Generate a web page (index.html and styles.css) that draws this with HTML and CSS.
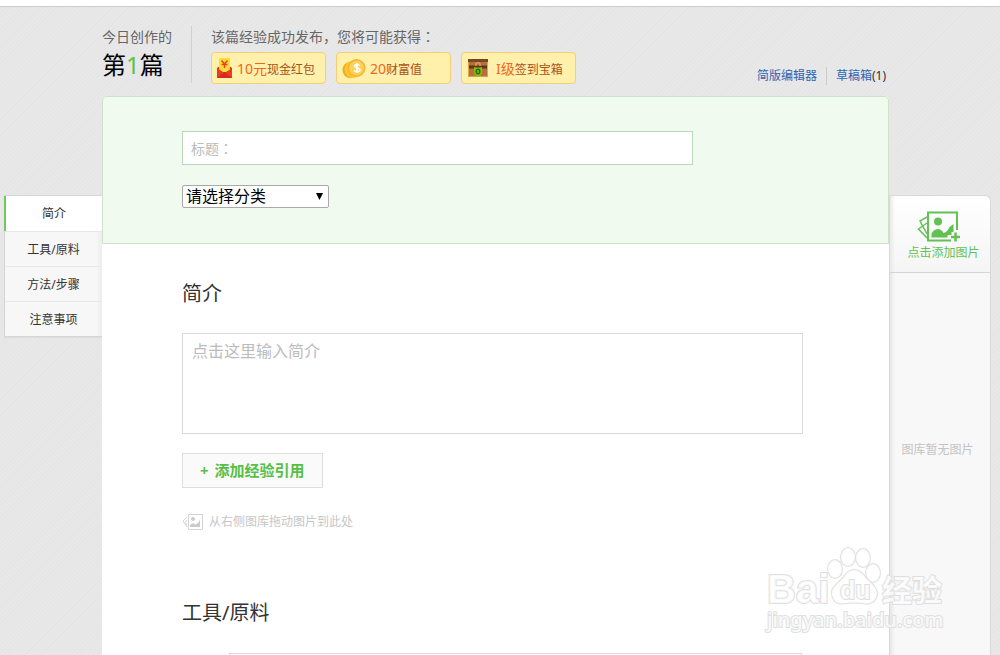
FILE: index.html
```html
<!DOCTYPE html>
<html lang="zh-CN">
<head>
<meta charset="utf-8">
<meta name="viewport" content="width=device-width, initial-scale=1">
<title>百度经验 - 写经验</title>
<link rel="stylesheet" href="styles.css">
</head>
<body>
<div class="page">
  <header class="top">
    <div class="count">
      <span class="count-label">今日创作的</span>
      <strong class="count-value">第<em>1</em>篇</strong>
    </div>
    <div class="rewards">
      <p class="rewards-title">该篇经验成功发布，您将可能获得<span class="centered-mark" lang="zh-Hant">：</span></p>
      <ul class="reward-list">
        <li class="reward">
          <svg class="reward-icon" width="24" height="24" viewBox="0 0 24 24" aria-hidden="true">
            <path d="M5 12l7.500-5 7.500 5v10H5z" fill="#c9281c"/>
            <path d="M7 2h11v14H7z" fill="#fddb3a"/>
            <path d="M9.500 4.500l3 3.500 3-3.500M9.500 8.500h6M12.500 8v4" stroke="#e5421f" stroke-width="1.400" fill="none"/>
            <path d="M5 12l7.500 5 7.500-5v10H5z" fill="#ea3d25"/>
            <path d="M5 22l7.500-6 7.500 6z" fill="#d42c1c"/>
          </svg>
          <span class="reward-text"><b>10元</b>现金红包</span>
        </li>
        <li class="reward">
          <svg class="reward-icon" width="26" height="24" viewBox="0 0 26 24" aria-hidden="true">
            <circle cx="9.500" cy="14" r="8" fill="#f0a91c"/>
            <circle cx="12" cy="13.500" r="8.500" fill="#fbc92e"/>
            <circle cx="15.500" cy="12" r="9" fill="#f7b32b"/>
            <circle cx="15.500" cy="12" r="7.500" fill="#fdd05a"/>
            <path d="M18.500 9.500c-1-1.500-5-1.500-5 .500 0 2.500 5.500 1.500 5.500 4 0 2-4.500 2-6 .500M16 7v10" fill="none" stroke="#fff" stroke-width="1.600"/>
          </svg>
          <span class="reward-text"><b>20</b>财富值</span>
        </li>
        <li class="reward">
          <svg class="reward-icon" width="22" height="22" viewBox="0 0 22 22" aria-hidden="true">
            <path d="M1 2h20v18H1z" fill="#b8703a"/>
            <path d="M1 2h20v3H1z" fill="#7a4520"/>
            <path d="M1 8.500h20v3H1z" fill="#5f3418"/>
            <path d="M1.500 5v15M20.500 5v15" stroke="#e0a840"/>
            <path d="M1 19.500h20" stroke="#dba044"/>
            <path d="M9 9V7q2-3 4 0v2" fill="none" stroke="#d9a05a" stroke-width="1.500"/>
            <path d="M7 10q4 1 8 0v6q-1 3-4 4-3-1-4-4z" fill="#7fc200"/>
            <ellipse cx="11" cy="14.500" rx="2.500" ry="3" fill="#2f6410"/>
            <path d="M11 13v3" stroke="#b3e43a"/>
          </svg>
          <span class="reward-text"><b>I级</b>签到宝箱</span>
        </li>
      </ul>
    </div>
    <nav class="top-links" aria-label="编辑器">
      <a href="#simple">简版编辑器</a>
      <span class="drafts"><a href="#drafts">草稿箱</a>(1)</span>
    </nav>
  </header>

  <nav class="steps" aria-label="章节">
    <a class="step step-current" href="#intro" aria-current="true">简介</a>
    <a class="step" href="#tools">工具/原料</a>
    <a class="step" href="#method">方法/步骤</a>
    <a class="step" href="#notes">注意事项</a>
  </nav>

  <main class="editor">
    <div class="basics">
      <input class="title-input centered-mark" lang="zh-Hant" type="text" placeholder="标题：" aria-label="标题">
      <select class="category" aria-label="分类">
        <option>请选择分类</option>
      </select>
    </div>
    <section class="section" id="intro">
      <h2 class="section-title">简介</h2>
      <textarea class="intro-input" placeholder="点击这里输入简介" aria-label="简介"></textarea>
      <button class="cite" type="button"><span class="cite-plus">+</span>添加经验引用</button>
      <p class="drop-hint">
        <svg width="22" height="16" viewBox="0 0 22 16" aria-hidden="true">
          <path d="M6.500.500h14v15h-14z" fill="#fff" stroke="#d4d4d4"/>
          <path d="M5 3L1 7l4 6M5 6L3 8.500 5 11" fill="none" stroke="#d4d4d4"/>
          <circle cx="11" cy="5" r="2" fill="#ccc"/>
          <path d="M8 13v-2q3-3 5-.500 3-.500 5-5V13z" fill="#ccc"/>
        </svg>
        从右侧图库拖动图片到此处
      </p>
    </section>
    <section class="section section-tools" id="tools">
      <h2 class="section-title">工具/原料</h2>
      <input class="tool-input" type="text" aria-label="工具/原料">
    </section>
  </main>

  <aside class="gallery" aria-label="图库">
    <button class="add-image" type="button">
      <svg class="add-icon" width="44" height="32" viewBox="0 0 44 32" aria-hidden="true">
        <path d="M10 6L3 10l7 13M10 12L1.500 18 10 27" fill="none" stroke="#63c153" stroke-width="1.500"/>
        <path d="M34 29.500H11V1.500h29V19" fill="none" stroke="#63c153" stroke-width="2"/>
        <circle cx="21" cy="10.500" r="4" fill="#63c153"/>
        <path d="M14.500 26.500V23q1-4 6-5 4 0 6 4 4-1 6-6l4-3v8h-2v3h-4v2.500z" fill="#63c153"/>
        <path d="M38.500 21.500v9M34 26h9" stroke="#63c153" stroke-width="2.500"/>
      </svg>
      点击添加图片
    </button>
    <p class="gallery-empty">图库暂无图片</p>
  </aside>
</div>

<svg class="watermark" width="190" height="96" viewBox="0 0 190 96" role="img" aria-label="百度经验">
  <g class="mark">
    <text class="mark-latin" x="4" y="58">Bai</text>
    <ellipse cx="72" cy="24" rx="7" ry="9"/>
    <ellipse cx="85" cy="12" rx="7" ry="9"/>
    <ellipse cx="100" cy="13" rx="7" ry="9"/>
    <ellipse cx="110" cy="28" rx="7" ry="9"/>
    <path d="M91 25q7 0 11 7l9 9q6 8 0 15-5 4-12 2-8-1-16 0-9 2-12-3-5-8 1-14l9-9q4-7 10-7z"/>
    <text class="mark-du" x="77" y="54">du</text>
    <text class="mark-cjk" x="119" y="56">经验</text>
    <text class="mark-url" x="4" y="82">jingyan.baidu.com</text>
  </g>
</svg>
</body>
</html>
```

FILE: styles.css
```css
* {
  box-sizing: border-box;
}

body {
  margin: 0;
  height: 100vh;
  overflow: hidden;
  position: relative;
  border-top: 6px solid #fff;
  background: repeating-linear-gradient(135deg, #e5e5e5 0 1px, #e8e8e8 1px 3px);
  color: #333;
  font: 12px/18px "Noto Sans", "Noto Sans CJK SC", sans-serif;
}

a {
  color: #2d64b3;
  text-decoration: none;
}

h2,
p,
ul {
  margin: 0;
  padding: 0;
}

button,
input,
select,
textarea {
  font-family: inherit;
}

.centered-mark {
  font-family: "Noto Sans", "Noto Sans CJK TC", sans-serif;
}

.page {
  display: grid;
  grid-template-columns: 98px minmax(0, 1fr) 102px;
  grid-template-rows: 89px auto;
  min-height: 100%;
  padding: 0 9px 0 4px;
  border-top: 1px solid #ccc;
}

/* Header */
.top {
  grid-column: 2;
  display: flex;
  align-items: flex-start;
  padding-top: 19px;
}

.count {
  display: flex;
  flex-direction: column;
  width: 90px;
  height: 57px;
  border-right: 1px solid #d0d0d0;
}

.count-label,
.rewards-title {
  color: #666;
  font-size: 14px;
  line-height: 22px;
}

.count-value {
  color: #000;
  font-size: 24px;
  font-weight: 400;
  line-height: 34px;
}

.count-value em {
  color: #57c443;
  font-style: normal;
}

.rewards {
  padding-left: 19px;
}

.reward-list {
  display: flex;
  gap: 10px;
  padding-top: 4px;
  list-style: none;
}

.reward {
  display: flex;
  align-items: center;
  gap: 1px;
  width: 115px;
  height: 32px;
  border: 1px solid #f7cd76;
  border-radius: 4px;
  background: #fff0ab;
}

.reward:nth-child(2) {
  padding-left: 4px;
  gap: 3px;
}

.reward:nth-child(3) {
  padding-left: 5px;
  gap: 7px;
}

.reward-text {
  padding-top: 2px;
  color: #a8501c;
  white-space: nowrap;
}

.reward-text b {
  color: #f4651f;
  font-size: 14px;
  font-weight: 400;
}

.top-links {
  display: flex;
  margin-left: auto;
  padding: 41px 3px 0 0;
  line-height: 18px;
}

.drafts {
  margin-left: 9px;
  padding-left: 9px;
  border-left: 1px solid #ccc;
  color: #333;
}

/* Section navigation */
.steps {
  grid-column: 1;
  grid-row: 2;
  align-self: start;
  margin-top: 99px;
  border: 1px solid #d6d6d6;
  border-right: 0;
  box-shadow: 0 1px 1px #ddd;
}

.step {
  display: block;
  height: 35px;
  border-top: 1px solid #e8e8e8;
  background: linear-gradient(to left, #ececec, #f7f7f7 6px);
  color: #333;
  line-height: 35px;
  text-align: center;
}

.step-current {
  margin-left: -1px;
  border-top: 0;
  border-left: 2px solid #6fca5d;
  background: #fff;
}

/* Editor */
.editor {
  grid-column: 2;
  grid-row: 2;
  border-radius: 4px 4px 0 0;
  background: #fff;
}

.basics {
  display: flex;
  flex-direction: column;
  align-items: flex-start;
  gap: 20px;
  height: 148px;
  padding: 34px 79px;
  border: 1px solid #cbe3cb;
  border-radius: 4px 4px 0 0;
  background: #f0faef;
}

.title-input {
  width: 82%;
  max-width: 511px;
  height: 34px;
  padding: 0 8px;
  border: 1px solid #b9d8b9;
  background: #fff;
  font-size: 14px;
}

.title-input::placeholder,
.intro-input::placeholder {
  color: #bbb;
}

.category {
  width: 147px;
  height: 23px;
  padding: 0 5px 0 3px;
  appearance: none;
  border: 1px solid #a9a9a9;
  border-radius: 2px;
  background: #fff url("data:image/svg+xml,%3Csvg xmlns='http://www.w3.org/2000/svg' width='7' height='7'%3E%3Cpath d='M0 0h7L3.5 7z'/%3E%3C/svg%3E") no-repeat right 5px center;
  color: #000;
  font-size: 16px;
  line-height: 21px;
}

.section {
  display: flex;
  flex-direction: column;
  align-items: flex-start;
  padding: 35px 86px 0 80px;
}

.section-title {
  font-size: 20px;
  font-weight: 400;
  line-height: 30px;
}

.intro-input {
  width: 100%;
  height: 101px;
  margin-top: 24px;
  padding: 4px 9px;
  border: 1px solid #d9d9d9;
  font-size: 16px;
  line-height: 26px;
  resize: none;
}

.cite {
  display: flex;
  align-items: center;
  gap: 6px;
  height: 35px;
  margin-top: 19px;
  padding: 0 17px 2px;
  border: 1px solid #dedede;
  background: #fafafa;
  color: #57bf46;
  font-size: 15px;
  font-weight: 700;
}

.drop-hint {
  display: flex;
  align-items: center;
  gap: 5px;
  margin-top: 25px;
  color: #c6c6c6;
}

.section-tools {
  padding-top: 67px;
}

.tool-input {
  align-self: stretch;
  height: 34px;
  margin: 25px 1px 0 47px;
  border: 1px solid #d9d9d9;
}

/* Picture gallery */
.gallery {
  grid-column: 3;
  grid-row: 2;
  display: flex;
  flex-direction: column;
  margin-top: 99px;
  border: 1px solid #d9d9d9;
  border-bottom: 0;
  border-radius: 0 6px 0 0;
  background: linear-gradient(to right, #e6e6e6, #f8f8f8 5px);
}

.add-image {
  display: flex;
  flex-direction: column;
  align-items: center;
  gap: 1px;
  height: 77px;
  padding: 15px 0 0 7px;
  border: 0;
  border-bottom: 1px solid #d6d6d6;
  border-radius: 0 6px 0 0;
  background: linear-gradient(to right, #e9e9e9, transparent 5px), linear-gradient(#fff, #f5f5f5);
  color: #63c153;
  font-size: 12px;
  line-height: 18px;
}

.add-icon {
  margin-right: 10px;
}

.gallery-empty {
  margin-top: 168px;
  padding-right: 5px;
  color: #c4c4c4;
  text-align: center;
}

/* Watermark over the page corner */
.watermark {
  position: absolute;
  right: 47px;
  bottom: 14px;
  pointer-events: none;
}

.mark {
  fill: #fff;
  fill-opacity: 0.8;
  stroke: #e0e0e0;
  stroke-width: 2px;
  font-weight: 700;
  paint-order: stroke;
}

.mark-latin {
  font-family: "Liberation Sans", sans-serif;
  font-size: 40px;
}

.mark-du {
  font-family: "Liberation Sans", sans-serif;
  font-size: 25px;
}

.mark-cjk {
  font-family: "Noto Sans CJK SC", sans-serif;
  font-size: 30px;
}

.mark-url {
  font-family: "Noto Sans", sans-serif;
  font-size: 20px;
  font-weight: 500;
}
```
